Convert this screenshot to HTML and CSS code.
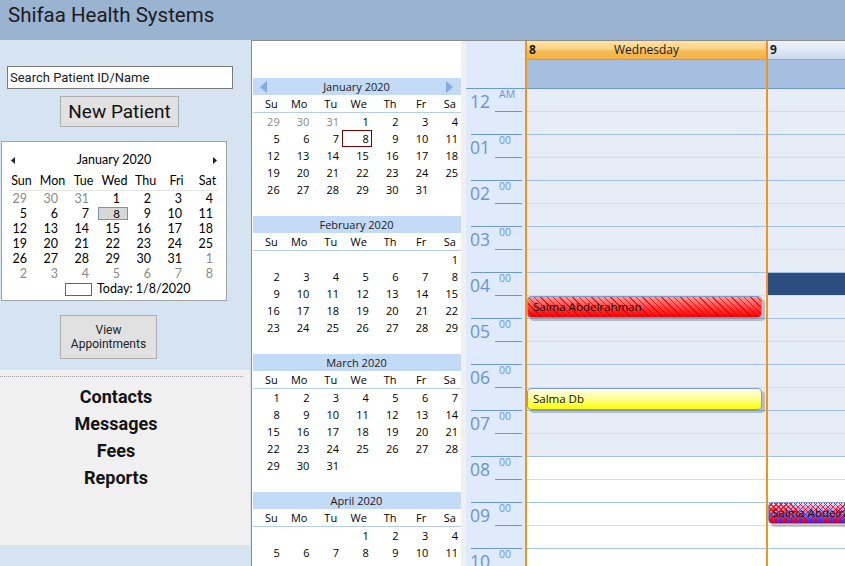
FILE: index.html
```html
<!DOCTYPE html>
<html>
<head>
<meta charset="utf-8">
<title>Shifaa Health Systems</title>
<link rel="stylesheet" href="styles.css">
</head>
<body>
<header class="topbar"><h1 class="title">Shifaa Health Systems</h1></header>
<div class="body">
  <aside class="left">
    <div class="search">Search Patient ID/Name</div>
    <button class="btn btn-new">New Patient</button>
    <div class="mcal">
      <div class="mc-head">
        <svg class="mc-arrow" width="4" height="7" viewBox="0 0 4 7"><polygon points="4,0 4,7 0,3.5" fill="#222"/></svg>
        <span>January 2020</span>
        <svg class="mc-arrow" width="4" height="7" viewBox="0 0 4 7"><polygon points="0,0 0,7 4,3.5" fill="#222"/></svg>
      </div>
      <div class="mc-dn"><span>Sun</span><span>Mon</span><span>Tue</span><span>Wed</span><span>Thu</span><span>Fri</span><span>Sat</span></div>
      <div class="mc-rule"></div>
      <div class="mc-grid">
        <span class="o">29</span><span class="o">30</span><span class="o">31</span><span>1</span><span>2</span><span>3</span><span>4</span>
        <span>5</span><span>6</span><span>7</span><span class="sel">8</span><span>9</span><span>10</span><span>11</span>
        <span>12</span><span>13</span><span>14</span><span>15</span><span>16</span><span>17</span><span>18</span>
        <span>19</span><span>20</span><span>21</span><span>22</span><span>23</span><span>24</span><span>25</span>
        <span>26</span><span>27</span><span>28</span><span>29</span><span>30</span><span>31</span><span class="o">1</span>
        <span class="o">2</span><span class="o">3</span><span class="o">4</span><span class="o">5</span><span class="o">6</span><span class="o">7</span><span class="o">8</span>
      </div>
      <div class="mc-today"><span class="tbox"></span><span>Today: 1/8/2020</span></div>
    </div>
    <button class="btn btn-view">View<br>Appointments</button>
    <nav class="menu">
      <div class="menu-dots"></div>
      <a class="menu-item">Contacts</a>
      <a class="menu-item">Messages</a>
      <a class="menu-item">Fees</a>
      <a class="menu-item">Reports</a>
    </nav>
  </aside>

  <main class="main">
    <div class="navpane">
      <div class="ncal">
        <div class="nc-head">
          <svg width="7" height="12" viewBox="0 0 7 12"><polygon points="7,0 7,12 0,6" fill="#86abe0"/></svg>
          <span>January 2020</span>
          <svg width="7" height="12" viewBox="0 0 7 12"><polygon points="0,0 0,12 7,6" fill="#86abe0"/></svg>
        </div>
        <div class="nc-dn"><span>Su</span><span>Mo</span><span>Tu</span><span>We</span><span>Th</span><span>Fr</span><span>Sa</span></div>
        <div class="nc-grid">
          <span class="o">29</span><span class="o">30</span><span class="o">31</span><span>1</span><span>2</span><span>3</span><span>4</span>
          <span>5</span><span>6</span><span>7</span><span class="nsel">8</span><span>9</span><span>10</span><span>11</span>
          <span>12</span><span>13</span><span>14</span><span>15</span><span>16</span><span>17</span><span>18</span>
          <span>19</span><span>20</span><span>21</span><span>22</span><span>23</span><span>24</span><span>25</span>
          <span>26</span><span>27</span><span>28</span><span>29</span><span>30</span><span>31</span><span></span>
        </div>
      </div>
      <div class="ncal">
        <div class="nc-head nc-plain"><span>February 2020</span></div>
        <div class="nc-dn"><span>Su</span><span>Mo</span><span>Tu</span><span>We</span><span>Th</span><span>Fr</span><span>Sa</span></div>
        <div class="nc-grid">
          <span></span><span></span><span></span><span></span><span></span><span></span><span>1</span>
          <span>2</span><span>3</span><span>4</span><span>5</span><span>6</span><span>7</span><span>8</span>
          <span>9</span><span>10</span><span>11</span><span>12</span><span>13</span><span>14</span><span>15</span>
          <span>16</span><span>17</span><span>18</span><span>19</span><span>20</span><span>21</span><span>22</span>
          <span>23</span><span>24</span><span>25</span><span>26</span><span>27</span><span>28</span><span>29</span>
        </div>
      </div>
      <div class="ncal">
        <div class="nc-head nc-plain"><span>March 2020</span></div>
        <div class="nc-dn"><span>Su</span><span>Mo</span><span>Tu</span><span>We</span><span>Th</span><span>Fr</span><span>Sa</span></div>
        <div class="nc-grid">
          <span>1</span><span>2</span><span>3</span><span>4</span><span>5</span><span>6</span><span>7</span>
          <span>8</span><span>9</span><span>10</span><span>11</span><span>12</span><span>13</span><span>14</span>
          <span>15</span><span>16</span><span>17</span><span>18</span><span>19</span><span>20</span><span>21</span>
          <span>22</span><span>23</span><span>24</span><span>25</span><span>26</span><span>27</span><span>28</span>
          <span>29</span><span>30</span><span>31</span>
        </div>
      </div>
      <div class="ncal">
        <div class="nc-head nc-plain"><span>April 2020</span></div>
        <div class="nc-dn"><span>Su</span><span>Mo</span><span>Tu</span><span>We</span><span>Th</span><span>Fr</span><span>Sa</span></div>
        <div class="nc-grid">
          <span></span><span></span><span></span><span>1</span><span>2</span><span>3</span><span>4</span>
          <span>5</span><span>6</span><span>7</span><span>8</span><span>9</span><span>10</span><span>11</span>
          <span>12</span><span>13</span><span>14</span><span>15</span><span>16</span><span>17</span><span>18</span>
        </div>
      </div>
    </div>
    <div class="splitter"></div>

    <div class="timecol">
      <div class="tc-top"></div>
      <div class="hour"><div class="hnum">12</div><div class="hmin">AM</div></div>
      <div class="hour"><div class="hnum">01</div><div class="hmin">00</div></div>
      <div class="hour"><div class="hnum">02</div><div class="hmin">00</div></div>
      <div class="hour"><div class="hnum">03</div><div class="hmin">00</div></div>
      <div class="hour"><div class="hnum">04</div><div class="hmin">00</div></div>
      <div class="hour"><div class="hnum">05</div><div class="hmin">00</div></div>
      <div class="hour"><div class="hnum">06</div><div class="hmin">00</div></div>
      <div class="hour"><div class="hnum">07</div><div class="hmin">00</div></div>
      <div class="hour"><div class="hnum">08</div><div class="hmin">00</div></div>
      <div class="hour"><div class="hnum">09</div><div class="hmin">00</div></div>
      <div class="hour"><div class="hnum">10</div><div class="hmin">00</div></div>
    </div>

    <div class="day day-today">
      <div class="dh"><b>8</b><span>Wednesday</span><span></span></div>
      <div class="allday"></div>
      <div class="slots">
        <div class="slot"></div><div class="slot"></div><div class="slot"></div><div class="slot"></div>
        <div class="slot"></div><div class="slot"></div><div class="slot"></div><div class="slot"></div>
        <div class="slot"></div><div class="slot"></div><div class="slot"></div><div class="slot"></div>
        <div class="slot"></div><div class="slot"></div><div class="slot"></div><div class="slot"></div>
        <div class="slot w"></div><div class="slot w"></div><div class="slot w"></div><div class="slot w"></div>
        <div class="slot w"></div>
        <div class="appt appt-red" style="top:207px">Salma Abdelrahman</div>
        <div class="appt appt-yellow" style="top:299px">Salma Db</div>
      </div>
    </div>

    <div class="day day-next">
      <div class="dh"><b>9</b><span></span><span></span></div>
      <div class="allday"></div>
      <div class="slots">
        <div class="slot"></div><div class="slot"></div><div class="slot"></div><div class="slot"></div>
        <div class="slot"></div><div class="slot"></div><div class="slot"></div><div class="slot"></div>
        <div class="slot selected"></div><div class="slot"></div><div class="slot"></div><div class="slot"></div>
        <div class="slot"></div><div class="slot"></div><div class="slot"></div><div class="slot"></div>
        <div class="slot w"></div><div class="slot w"></div><div class="slot w"></div><div class="slot w"></div>
        <div class="slot w"></div>
        <div class="appt appt-check" style="top:413px">Salma Abdelrahman</div>
      </div>
    </div>
  </main>
</div>
</body>
</html>
```

FILE: styles.css
```css
* { box-sizing: border-box; margin: 0; padding: 0; }
html, body { width: 845px; height: 566px; overflow: hidden; }
body { font-family: "Open Sans", "Noto Sans", sans-serif; background: #d6e3f0; color: #000; }

.topbar { height: 40px; background: #9ab3d1; padding: 2px 0 0 8px; }
.title { font-family: Roboto, "Open Sans", sans-serif; font-weight: 400; font-size: 20.5px; line-height: 26px; color: #1c1c1c; }

.body { display: flex; height: 526px; }

/* ---------- left panel ---------- */
.left { width: 251px; flex-shrink: 0; background: #d6e3f0; display: flex; flex-direction: column; align-items: flex-start; padding-top: 26px; }
.left > * { flex-shrink: 0; }
.search { margin-left: 7px; width: 226px; height: 23px; border: 1px solid #7a7a7a; background: #fff; font-family: Roboto, sans-serif; font-size: 13px; line-height: 21px; padding-left: 2px; color: #1a1a1a; }
.btn { font-family: Roboto, sans-serif; background: #e1e1e1; border: 1px solid #adadad; color: #111; text-align: center; }
.btn-new { margin: 7px 0 0 60px; width: 119px; height: 31px; font-size: 19px; line-height: 28px; }
.btn-view { margin: 14px 0 0 60px; width: 97px; height: 44px; font-size: 12px; line-height: 14px; color: #222; }

.mcal { margin: 14px 0 0 1px; width: 226px; height: 160px; border: 1px solid #a3a3a3; background: #fff; padding: 0 3px 0 4px; font-family: Lato, "Open Sans", sans-serif; font-size: 12.5px; }
.mc-head { margin-top: 8px; height: 20px; display: flex; align-items: center; justify-content: space-between; padding: 0 6px 0 5px; line-height: 20px; }
.mc-arrow { display: block; }
.mc-dn { display: grid; grid-template-columns: repeat(7, 31px); height: 20px; padding-top: 3px; line-height: 16px; text-align: center; }
.mc-rule { height: 1px; background: #e6e6e6; margin: 0 5px 0 4px; }
.mc-grid { display: grid; grid-template-columns: repeat(7, 31px); grid-auto-rows: 15px; line-height: 15px; }
.mc-grid span { text-align: right; padding-right: 10px; }
.mc-grid .o { color: #8a8a8a; }
.mc-grid .sel { margin: 1px 2px 1px -1px; border: 1px solid #7393c2; background: #d7d7d7; line-height: 11px; padding-right: 7px; font-size: 11.5px; }
.mc-today { display: flex; align-items: center; height: 16px; padding-left: 59px; line-height: 16px; }
.tbox { width: 27px; height: 13px; border: 1px solid #2f6dd3; margin-right: 5px; }

.menu { margin-top: 11px; width: 250px; height: 175px; background: #f0f0f0; padding-top: 6px; display: flex; flex-direction: column; }
.menu-dots { width: 243px; border-top: 1px dotted #9c9c9c; margin-bottom: 6px; }
.menu-item { width: 232px; text-align: center; font-family: Roboto, sans-serif; font-weight: 700; font-size: 18px; line-height: 27px; color: #141414; }

/* ---------- main ---------- */
.main { flex: 1; display: flex; border-top: 1px solid #8d8d8d; border-left: 1px solid #8d8d8d; background: #fff; overflow: hidden; min-width: 0; }

.navpane { width: 209px; flex-shrink: 0; background: #fff; padding: 37px 0 0 1px; font-size: 11px; }
.ncal { margin-bottom: 1px; }
.nc-head { height: 17px; background: #c4dbf7; display: flex; align-items: center; justify-content: space-between; padding: 0 8px 0 7px; line-height: 17px; color: #1a1a1a; }
.nc-head svg { display: block; }
.nc-plain { justify-content: center; }
.nc-dn { display: grid; grid-template-columns: repeat(7, 1fr); height: 18px; border-bottom: 1px solid #b5cdef; line-height: 17px; }
.nc-dn span { text-align: right; padding-right: 5px; }
.nc-grid { display: grid; grid-template-columns: repeat(7, 1fr); grid-template-rows: repeat(6, 17px); line-height: 17px; }
.nc-grid span { text-align: right; padding-right: 3px; }
.nc-grid .o { color: #8a8a8a; }
.nc-grid .nsel { border: 1px solid #7b0000; padding-right: 2px; line-height: 15px; }

.splitter { width: 5px; flex-shrink: 0; background: #f0f0f0; }

.timecol { width: 59px; flex-shrink: 0; background: #dfeafa; color: #6d93d2; }
.tc-top { height: 48px; border-bottom: 1px solid #6c97d4; }
.hour { display: flex; height: 46px; margin-left: 5px; width: 51px; border-bottom: 1px solid #6c97d4; }
.hnum { width: 25px; margin-left: -1px; font-size: 17.5px; line-height: 20px; padding-top: 2px; }
.hmin { width: 27px; height: 23px; border-bottom: 1px solid #6c97d4; font-size: 10.5px; line-height: 11px; padding-left: 4px; }

.day { display: flex; flex-direction: column; }
.day > * { flex-shrink: 0; }
.day-today { width: 243px; flex-shrink: 0; border-left: 2px solid #f0941e; border-right: 2px solid #f0941e; }
.day-next { flex: 1; min-width: 0; }
.dh { height: 19px; border-bottom: 1px solid #86a8d6; display: grid; grid-template-columns: 1fr auto 1fr; align-items: center; padding: 0 2px; font-size: 12px; line-height: 18px; color: #1a1a1a; }
.day-today .dh { background: linear-gradient(#fde4a6, #fbd283 45%, #f6bc58 55%, #f4b143); }
.day-next .dh { background: linear-gradient(#edf2fa, #dfe8f5 50%, #cbdaee); }
.allday { height: 29px; background: #a6bfe0; border-bottom: 1px solid #6c97d4; }

.slots { position: relative; }
.slot { height: 23px; background: #e6edf7; border-bottom: 1px solid #d3dce9; }
.slot:nth-child(even) { border-bottom-color: #a3c1e8; }
.slot.w { background: #fff; border-bottom-color: #d6dee6; }
.slot.w:nth-child(even) { border-bottom-color: #a3c1e8; }
.slot.selected { background: #2b4c7e; }

.appt { position: absolute; left: 0; width: 235px; height: 22px; border: 1px solid #7f9cc8; border-radius: 4px; box-shadow: 3px 3px 0 rgba(0,0,0,0.2); font-size: 11.5px; line-height: 20px; padding-left: 5px; color: #111; white-space: nowrap; overflow: hidden; }
.appt-red { background: repeating-linear-gradient(45deg, rgba(215,0,0,0.75) 0 1px, transparent 1px 4.5px), linear-gradient(#ff9d9d, #ff3a3a 55%, #fa0000); }
.appt-yellow { background: linear-gradient(#ffffee, #ffff90 50%, #ffff00); }
.appt-check { width: 100px; padding-left: 3px; border-radius: 4px 0 0 4px; background: repeating-linear-gradient(45deg, rgba(255,0,0,0.85) 0 1px, transparent 1px 3.5px), repeating-linear-gradient(-45deg, rgba(255,0,0,0.85) 0 1px, transparent 1px 3.5px), linear-gradient(#e8e8ff, #8a8aff 50%, #1a1aff); }
```
